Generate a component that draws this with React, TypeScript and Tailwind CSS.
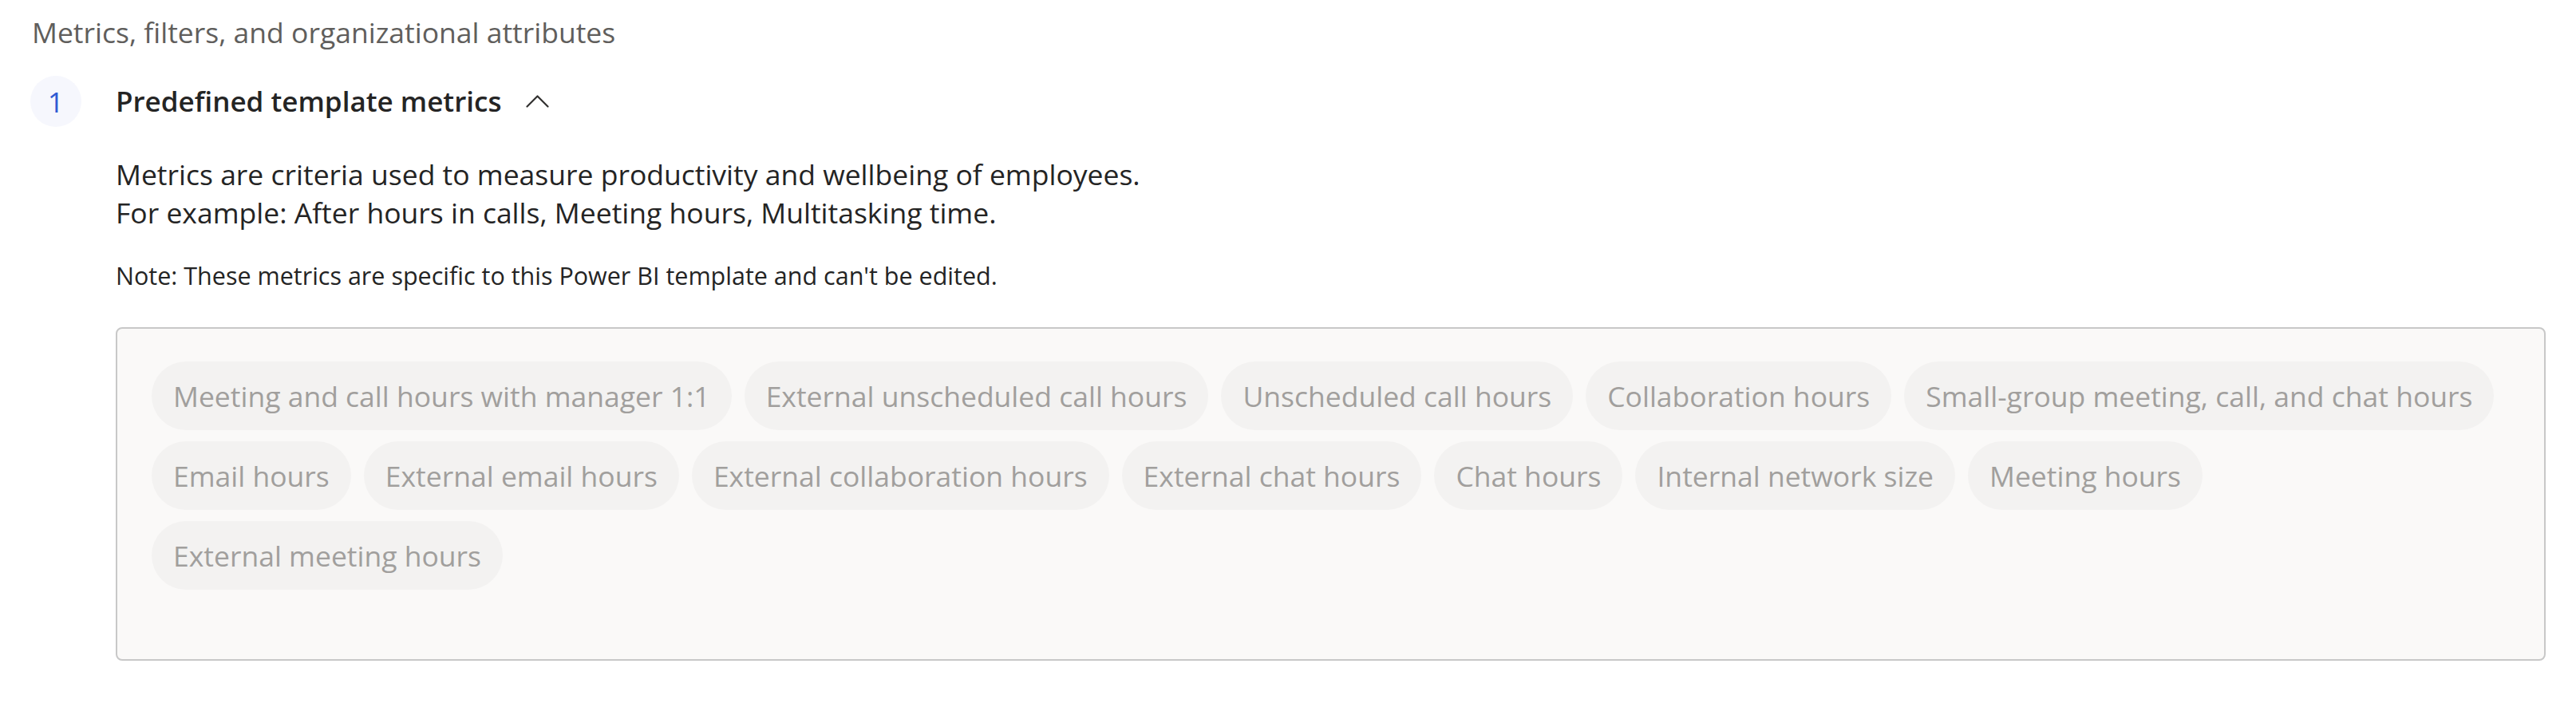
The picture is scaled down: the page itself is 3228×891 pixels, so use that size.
import React from "react";

const rows: string[][] = [
  [
    "Meeting and call hours with manager 1:1",
    "External unscheduled call hours",
    "Unscheduled call hours",
    "Collaboration hours",
    "Small-group meeting, call, and chat hours",
  ],
  [
    "Email hours",
    "External email hours",
    "External collaboration hours",
    "External chat hours",
    "Chat hours",
    "Internal network size",
    "Meeting hours",
  ],
  ["External meeting hours"],
];

function Chip({ label }: { label: string }) {
  return (
    <div className="flex h-[86px] items-center whitespace-nowrap rounded-full bg-[#f3f2f1] px-[27px] text-[35.5px] leading-[48px] text-[#a19f9d]">
      {label}
    </div>
  );
}

export default function App() {
  return (
    <div
      className="min-h-screen bg-white px-[38px] pt-[16px] pb-[40px] text-[#242424]"
      style={{ fontFamily: '"Segoe UI", "Open Sans", "Noto Sans", sans-serif' }}
    >
      <div className="pl-[2px] text-[35.5px] leading-[48px] text-[#605e5c]">
        Metrics, filters, and organizational attributes
      </div>

      <div className="mt-[31px] flex items-center">
        <div className="flex h-[64px] w-[64px] items-center justify-center rounded-full bg-[#f6f7fd] text-[35.5px] leading-[48px] text-[#2f5bd3]">
          1
        </div>
        <div className="ml-[43px] text-[35px] font-semibold leading-[48px] text-[#242424]">
          Predefined template metrics
        </div>
        <svg
          className="ml-[30px]"
          width="29"
          height="16"
          viewBox="0 0 29 16"
          fill="none"
        >
          <polyline
            points="1.5,14.5 14.5,1.5 27.5,14.5"
            stroke="#323130"
            strokeWidth="2.2"
            strokeLinecap="round"
            strokeLinejoin="round"
          />
        </svg>
      </div>

      <div className="ml-[107px]">
        <div className="mt-[35px] text-[35.5px] leading-[48px]">
          <div>Metrics are criteria used to measure productivity and wellbeing of employees.</div>
          <div>For example: After hours in calls, Meeting hours, Multitasking time.</div>
        </div>
        <div className="mt-[35px] text-[30.5px] leading-[40px]">
          Note: These metrics are specific to this Power BI template and can't be edited.
        </div>

        <div className="mt-[45px] rounded-[8px] border-2 border-[#c8c8c8] bg-[#faf9f8] pt-[41px] pr-[43px] pb-[87px] pl-[43px]">
          <div className="flex flex-col gap-[14px]">
            {rows.map((r, i) => (
              <div key={i} className="flex gap-[16px]">
                {r.map((c) => (
                  <Chip key={c} label={c} />
                ))}
              </div>
            ))}
          </div>
        </div>
      </div>
    </div>
  );
}
